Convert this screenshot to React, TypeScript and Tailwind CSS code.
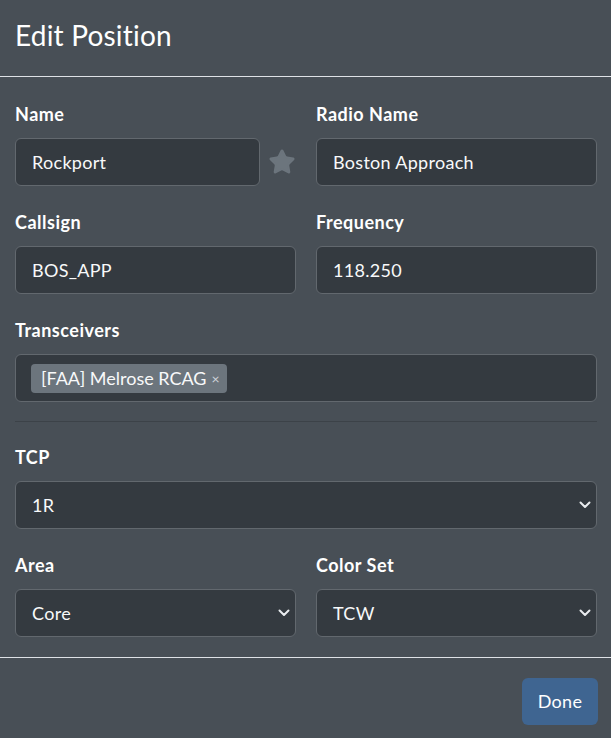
import { Star } from "lucide-react";

const font = { fontFamily: "Lato, 'Liberation Sans', sans-serif" };

function Chevron() {
  return (
    <svg width="12" height="8" viewBox="0 0 12 8" className="shrink-0">
      <path d="M1.5 1.5l4.5 4.5 4.5-4.5" fill="none" stroke="#e9ecef" strokeWidth="2" strokeLinecap="round" strokeLinejoin="round" />
    </svg>
  );
}

function Field({ label, children }: { label: string; children: React.ReactNode }) {
  return (
    <div className="flex flex-col">
      <label className="mb-[13px] text-[18px] font-bold leading-[22px] tracking-[0.5px] text-white">{label}</label>
      {children}
    </div>
  );
}

function TextBox({ value }: { value: string }) {
  return (
    <div className="flex h-[48px] w-full items-center rounded-md border border-[#62686e] bg-[#343a40] px-[16px] text-[18px] tracking-[0.3px] text-[#f8f9fa]">
      {value}
    </div>
  );
}

function SelectBox({ value }: { value: string }) {
  return (
    <div className="flex h-[48px] w-full items-center justify-between rounded-md border border-[#62686e] bg-[#343a40] pl-[16px] pr-[5px] text-[18px] tracking-[0.3px] text-[#f8f9fa]">
      <span>{value}</span>
      <Chevron />
    </div>
  );
}

export default function App() {
  return (
    <div style={font} className="h-[738px] w-[611px] bg-[#484f56] text-white">
      <div className="flex h-[77px] items-center border-b border-[#dee2e6] px-[15px] pb-[6px]">
        <h1 className="text-[28px] font-normal leading-none tracking-[0.2px] text-white">Edit Position</h1>
      </div>

      <div className="flex flex-col pl-[15px] pr-[14px] pt-[26px]">
        <div className="grid grid-cols-2 gap-x-[20px] gap-y-[25px]">
          <Field label="Name">
            <div className="flex items-center gap-[8px]">
              <TextBox value="Rockport" />
              <Star size={28} className="shrink-0 fill-[#6c757d] text-[#6c757d]" strokeWidth={1.5} />
            </div>
          </Field>
          <Field label="Radio Name">
            <TextBox value="Boston Approach" />
          </Field>
          <Field label="Callsign">
            <TextBox value="BOS_APP" />
          </Field>
          <Field label="Frequency">
            <TextBox value="118.250" />
          </Field>
        </div>

        <div className="mt-[25px]">
          <Field label="Transceivers">
            <div className="flex h-[48px] w-full items-center rounded-md border border-[#62686e] bg-[#343a40] px-[15px]">
              <span className="flex h-[29px] items-center gap-[5px] rounded-[4px] bg-[#6c757d] pl-[10px] pr-[7px] text-[18px] text-[#f8f9fa]">
                [FAA] Melrose RCAG
                <span className="text-[14px] text-[#ced4da]">×</span>
              </span>
            </div>
          </Field>
        </div>

        <div className="mt-[19px] border-t border-[#3c4248]" />

        <div className="mt-[24px]">
          <Field label="TCP">
            <SelectBox value="1R" />
          </Field>
        </div>

        <div className="mt-[25px] grid grid-cols-2 gap-x-[20px]">
          <Field label="Area">
            <SelectBox value="Core" />
          </Field>
          <Field label="Color Set">
            <SelectBox value="TCW" />
          </Field>
        </div>
      </div>

      <div className="mt-[20px] flex justify-end border-t border-[#dee2e6] px-[13px] pt-[20px]">
        <button className="h-[47px] w-[76px] rounded-md bg-[#3f6591] text-[18px] tracking-[0.3px] text-white">Done</button>
      </div>
    </div>
  );
}
